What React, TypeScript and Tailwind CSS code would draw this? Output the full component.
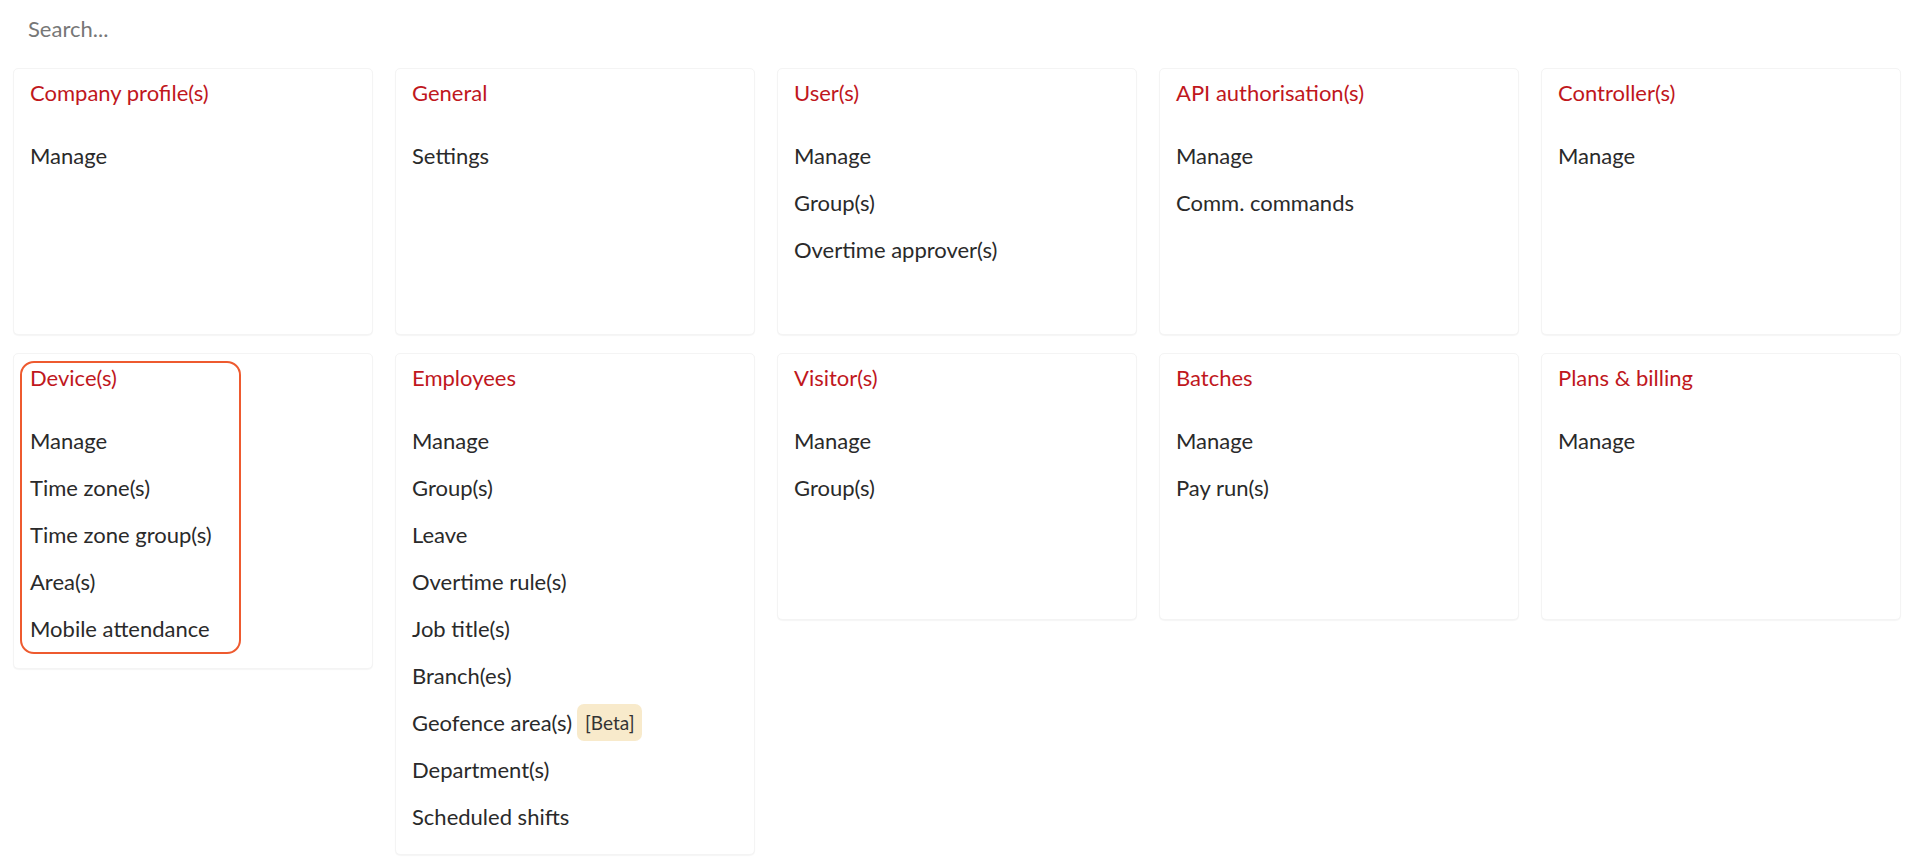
import { useState } from "react";

type Section = {
  title: string;
  items: { label: string; badge?: string }[];
  highlight?: boolean;
};

const sections: Section[] = [
  { title: "Company profile(s)", items: [{ label: "Manage" }] },
  { title: "General", items: [{ label: "Settings" }] },
  {
    title: "User(s)",
    items: [
      { label: "Manage" },
      { label: "Group(s)" },
      { label: "Overtime approver(s)" },
    ],
  },
  {
    title: "API authorisation(s)",
    items: [{ label: "Manage" }, { label: "Comm. commands" }],
  },
  { title: "Controller(s)", items: [{ label: "Manage" }] },
  {
    title: "Device(s)",
    highlight: true,
    items: [
      { label: "Manage" },
      { label: "Time zone(s)" },
      { label: "Time zone group(s)" },
      { label: "Area(s)" },
      { label: "Mobile attendance" },
    ],
  },
  {
    title: "Employees",
    items: [
      { label: "Manage" },
      { label: "Group(s)" },
      { label: "Leave" },
      { label: "Overtime rule(s)" },
      { label: "Job title(s)" },
      { label: "Branch(es)" },
      { label: "Geofence area(s)", badge: "[Beta]" },
      { label: "Department(s)" },
      { label: "Scheduled shifts" },
    ],
  },
  {
    title: "Visitor(s)",
    items: [{ label: "Manage" }, { label: "Group(s)" }],
  },
  {
    title: "Batches",
    items: [{ label: "Manage" }, { label: "Pay run(s)" }],
  },
  { title: "Plans & billing", items: [{ label: "Manage" }] },
];

function SectionBody({ section }: { section: Section }) {
  return (
    <>
      <h3 className="text-[22px] leading-[24px] text-[#c0171d]">
        {section.title}
      </h3>
      <ul className="mt-[27px] flex flex-col">
        {section.items.map((item) => (
          <li
            key={item.label}
            className="flex h-[47px] items-center text-[22px] leading-[24px] text-[#2a2a2a]"
          >
            <a href="#" className="hover:text-[#c0171d]">
              {item.label}
            </a>
            {item.badge && (
              <span className="ml-[5px] flex h-[37px] items-center rounded-[7px] bg-[#f8eacb] px-[8px] text-[19px] text-[#333]">
                {item.badge}
              </span>
            )}
          </li>
        ))}
      </ul>
    </>
  );
}

export default function App() {
  const [query, setQuery] = useState("");

  const visible = sections.filter(
    (s) =>
      !query ||
      s.title.toLowerCase().includes(query.toLowerCase()) ||
      s.items.some((i) => i.label.toLowerCase().includes(query.toLowerCase())),
  );

  return (
    <div className="min-h-screen bg-white px-[13px] font-['Lato','Noto_Sans',sans-serif]">
      <input
        autoFocus
        value={query}
        onChange={(e) => setQuery(e.target.value)}
        placeholder="Search..."
        className="block h-[56px] w-full bg-transparent pl-[15px] text-[22px] text-[#333] caret-[#333] outline-none placeholder:text-[#777]"
      />

      <div className="mt-[12px] grid grid-cols-[repeat(5,360px)] items-start gap-x-[22px] gap-y-[18px]">
        {visible.map((section) => (
          <div
            key={section.title}
            className="min-h-[267px] rounded-[5px] border border-[#f4f4f4] bg-white px-[16px] pt-[12px] pb-[14px] shadow-[0_1px_1px_rgba(0,0,0,0.04)]"
          >
            {section.highlight ? (
              <div className="-mt-[5px] -ml-[10px] w-[221px] rounded-[14px] border-2 border-[#ee5a2f] pt-[3px] pl-[8px]">
                <SectionBody section={section} />
              </div>
            ) : (
              <SectionBody section={section} />
            )}
          </div>
        ))}
      </div>
    </div>
  );
}
